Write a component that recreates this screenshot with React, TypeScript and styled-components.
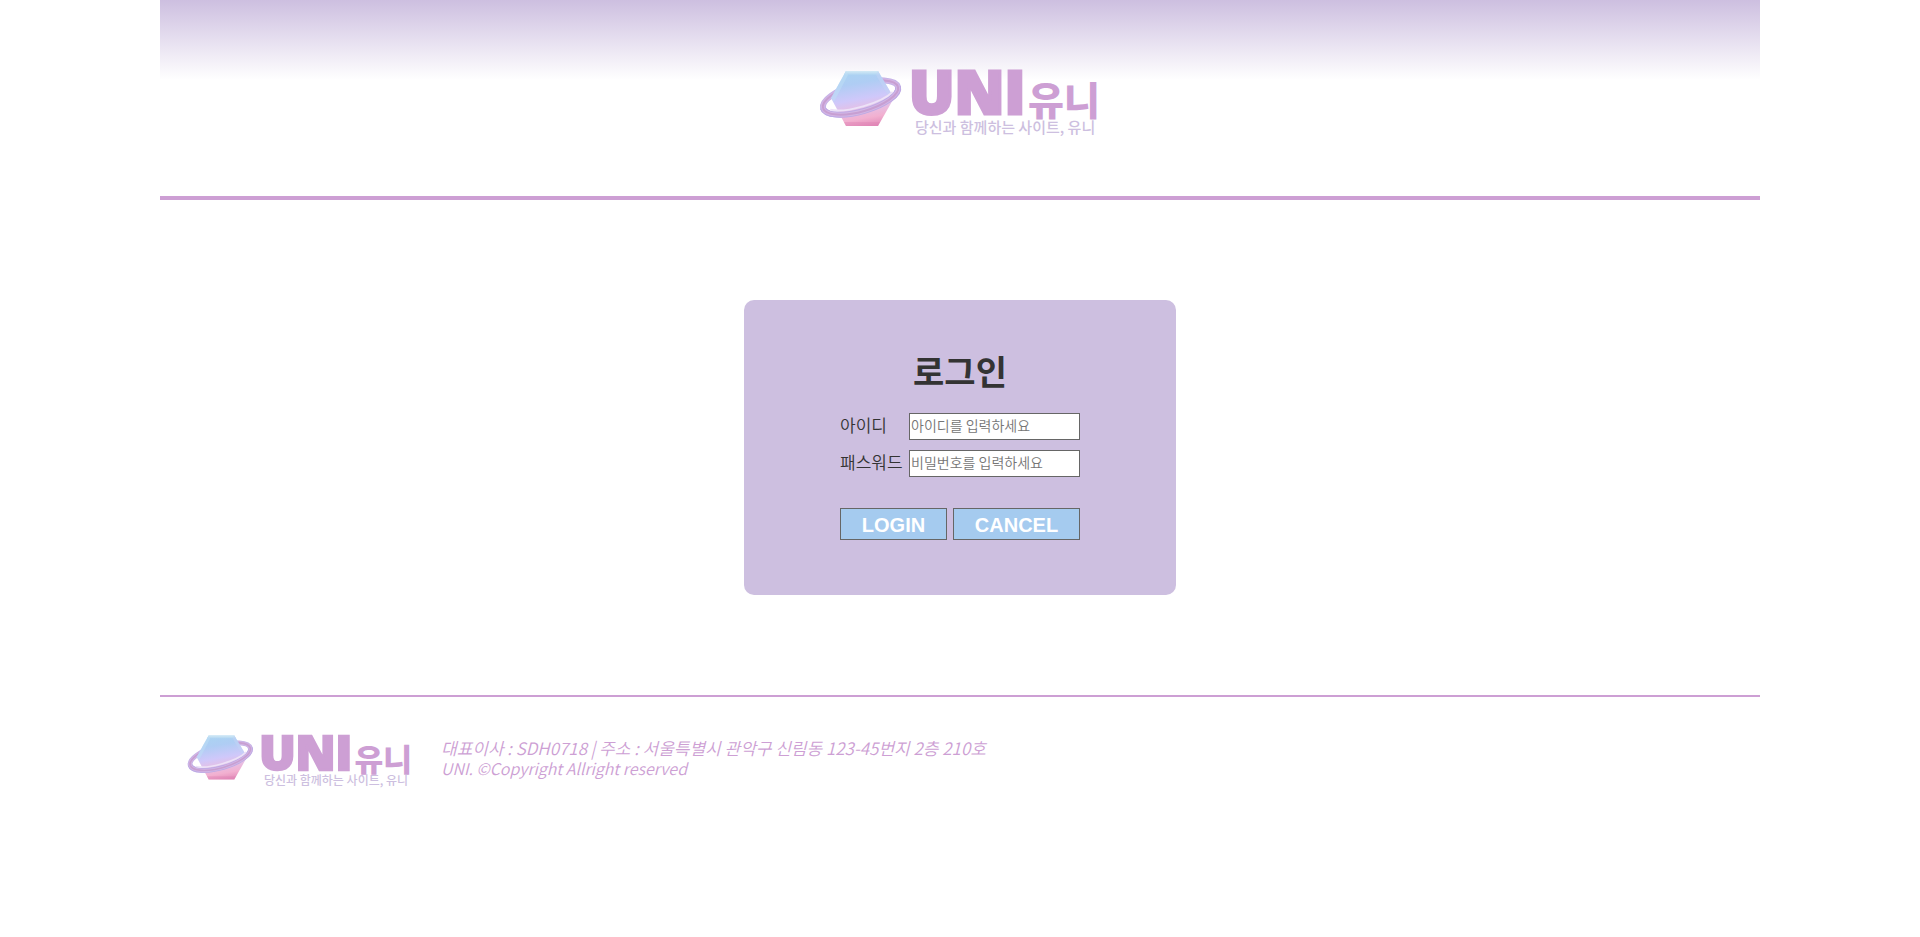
import React from 'react';
import styled, { createGlobalStyle } from 'styled-components';

const mauve = '#cd9fd4';
const lavender = '#cdbfe0';

const GlobalStyle = createGlobalStyle`
  * { box-sizing: border-box; }
  body {
    margin: 0;
    background: #fff;
    color: #333;
    font-family: 'Noto Sans CJK KR', sans-serif;
    font-size: 17px;
    font-weight: 350;
    line-height: 22px;
  }
`;

const Page = styled.div`
  width: 100%;
  max-width: 1600px;
  margin: 0 auto;
`;

const Header = styled.header`
  display: flex;
  justify-content: center;
  padding: 68px 0 60px;
  border-bottom: 4px solid ${mauve};
  background: linear-gradient(${lavender}, #fff 80px);
`;

const HomeLink = styled.a`
  display: block;
`;

const LogoArt = styled.svg<{ $width: number }>`
  display: block;
  width: ${(p) => p.$width}px;
  height: auto;
  overflow: visible;
`;

const Main = styled.main`
  display: flex;
  justify-content: center;
  padding: 100px 0;
`;

const LoginCard = styled.section`
  display: flex;
  flex-direction: column;
  align-items: center;
  width: 27%;
  min-width: 300px;
  padding: 47px 0 55px;
  border-radius: 10px;
  background: ${lavender};
`;

const Title = styled.h1`
  margin: 0 0 18px;
  font-size: 34px;
  font-weight: 700;
  line-height: 48px;
`;

const LoginForm = styled.form`
  width: 240px;
`;

const Field = styled.div`
  display: flex;
  justify-content: space-between;
  margin-bottom: 10px;
`;

const Label = styled.label`
  line-height: 24px;
`;

const TextInput = styled.input`
  width: 171px;
  height: 27px;
  padding: 0 1px 3px;
  border: 1px solid #666;
  border-radius: 0;
  background: #fff;
  color: #333;
  font: 350 14px 'Noto Sans CJK KR', sans-serif;

  &::placeholder {
    color: #757575;
    opacity: 1;
  }
`;

const Actions = styled.div`
  display: flex;
  gap: 6px;
  margin-top: 31px;
`;

const ActionButton = styled.button`
  flex: 1 1 auto;
  height: 32px;
  padding: 2px 20px 0;
  border: 1px solid #666;
  background: #a5cbef;
  color: #fff;
  font: 700 20px 'Liberation Sans', Arial, sans-serif;
  cursor: pointer;
`;

const Footer = styled.footer`
  display: flex;
  align-items: flex-start;
  gap: 28px;
  padding: 36px 27px;
  border-top: 2px solid ${mauve};
`;

const CompanyInfo = styled.address`
  padding-top: 4px;
  color: ${mauve};
  font-style: italic;
  line-height: 21px;
`;

const Copyright = styled.div`
  font-size: 16px;
`;

function Logo({ width, id }: { width: number; id: string }) {
  const ring = 'rotate(-16 41.5 29.5)';
  const front = 'M2.5 29.5A39 14 0 0 0 80.5 29.5';
  return (
    <LogoArt $width={width} viewBox="0 0 282 68" role="img" aria-label="UNI 유니">
      <defs>
        <linearGradient id={`${id}-gem`} x1="0.4" y1="0" x2="0.6" y2="1">
          <stop offset="0" stopColor="#aad3f2" />
          <stop offset="0.22" stopColor="#afcdf4" />
          <stop offset="0.5" stopColor="#cfc8fa" />
          <stop offset="0.68" stopColor="#e6bfe4" />
          <stop offset="0.85" stopColor="#f2b0d0" />
          <stop offset="1" stopColor="#e38dba" />
        </linearGradient>
        <linearGradient id={`${id}-top`} x1="0" y1="0" x2="0" y2="1">
          <stop offset="0" stopColor="#d3eaf5" />
          <stop offset="1" stopColor="#aed3f2" />
        </linearGradient>
      </defs>
      <g fill="none" transform={ring}>
        <ellipse cx="41.5" cy="29.5" rx="39" ry="14" stroke="#c5b3e8" strokeWidth="6" />
        <ellipse cx="41.5" cy="29.5" rx="39" ry="14" stroke="#d4b5e3" strokeWidth="4" />
        <ellipse cx="41.5" cy="29.5" rx="39" ry="14" stroke="#c79fd2" strokeWidth="2" />
      </g>
      <path d="M27 3H59L75 30L59 58H27L12 30Z" fill={`url(#${id}-gem)`} />
      <path d="M27 3H59L61 7H25Z" fill={`url(#${id}-top)`} />
      <path d="M27 3L12 30L15 34L29 7Z" fill="#bfe0f6" opacity="0.5" />
      <path d="M59 3L75 30L72 33L57 7Z" fill="#c3d3f6" opacity="0.5" />
      <path d="M25 54H61L59 58H27Z" fill="#dc7fb2" opacity="0.35" />
      <g fill="none" transform={ring}>
        <path d={front} stroke="#bda9e4" strokeWidth="6" />
        <path d={front} stroke="#d3b6e4" strokeWidth="4" />
        <path d={front} stroke="#c79fd2" strokeWidth="2" />
        <path d="M9 33A37 11 0 0 0 74 33" stroke="#ece2f7" strokeWidth="2" />
      </g>
      <g fill={mauve}>
        <text
          x="90"
          y="46"
          fontFamily="'Open Sans', sans-serif"
          fontSize="60"
          fontWeight="800"
          stroke={mauve}
          strokeWidth="3"
        >
          UNI
        </text>
        <text x="209" y="47" fontFamily="'Noto Sans CJK KR', sans-serif" fontSize="39" fontWeight="900">
          유니
        </text>
      </g>
      <text x="96" y="65" fill={lavender} fontFamily="'Noto Sans CJK KR', sans-serif" fontSize="15" fontWeight="500">
        당신과 함께하는 사이트, 유니
      </text>
    </LogoArt>
  );
}

export default function App() {
  return (
    <>
      <GlobalStyle />
      <Page>
        <Header>
          <HomeLink href="#">
            <Logo width={282} id="header" />
          </HomeLink>
        </Header>
        <Main>
          <LoginCard>
            <Title>로그인</Title>
            <LoginForm onSubmit={(e) => e.preventDefault()}>
              <Field>
                <Label htmlFor="user-id">아이디</Label>
                <TextInput id="user-id" type="text" placeholder="아이디를 입력하세요" />
              </Field>
              <Field>
                <Label htmlFor="user-password">패스워드</Label>
                <TextInput id="user-password" type="password" placeholder="비밀번호를 입력하세요" />
              </Field>
              <Actions>
                <ActionButton type="submit">LOGIN</ActionButton>
                <ActionButton type="reset">CANCEL</ActionButton>
              </Actions>
            </LoginForm>
          </LoginCard>
        </Main>
        <Footer>
          <HomeLink href="#">
            <Logo width={226} id="footer" />
          </HomeLink>
          <CompanyInfo>
            대표이사 : SDH0718 | 주소 : 서울특별시 관악구 신림동 123-45번지 2층 210호
            <Copyright>UNI. ©Copyright Allright reserved</Copyright>
          </CompanyInfo>
        </Footer>
      </Page>
    </>
  );
}
